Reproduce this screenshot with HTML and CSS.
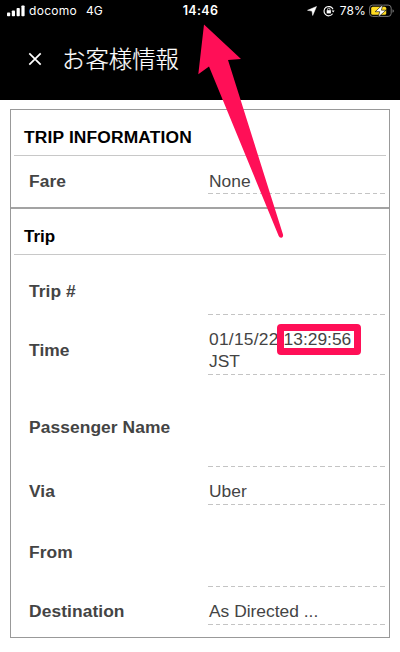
FILE: index.html
```html
<!DOCTYPE html>
<html lang="ja">
<head>
<meta charset="utf-8">
<title>お客様情報</title>
<link rel="stylesheet" href="styles.css">
</head>
<body>
<header class="top">
  <div class="status">
    <div class="carrier">
      <svg width="18" height="12" viewBox="0 0 18 12" fill="#fff"><rect x="0" y="7.5" width="3.2" height="3.8" rx=".8"/><rect x="4.8" y="5.5" width="3.2" height="5.8" rx=".8"/><rect x="9.6" y="3" width="3.2" height="8.3" rx=".8"/><rect x="14.4" y="0.5" width="3.2" height="10.8" rx=".8"/></svg>
      <span class="docomo">docomo</span><span class="network">4G</span>
    </div>
    <span class="clock">14:46</span>
    <div class="indicators">
      <svg width="10" height="10" viewBox="0 0 10 10"><path d="M9.5.5 5.7 9.5 5 5.1.5 4.3Z" fill="#fff" stroke="#fff" stroke-width=".5" stroke-linejoin="round"/></svg>
      <svg class="lock" width="12" height="12" viewBox="0 0 12 12" fill="none" stroke="#fff"><path d="M10 4.2A4.7 4.7 0 1 0 9.6 8.8" stroke-width="1.1"/><path d="M8.6 5.4h3l-1.4 2Z" fill="#fff" stroke="none"/><rect x="3.7" y="5.2" width="4.2" height="3.2" fill="#fff" stroke="none"/><path d="M4.6 5.4V4.3a1.2 1.2 0 0 1 2.4 0v1.1" stroke-width=".8"/></svg>
      <span class="percent">78%</span>
      <svg width="25" height="14" viewBox="0 0 25 14"><rect x=".6" y="1.1" width="21.6" height="11.3" rx="3" fill="none" stroke="#777"/><rect x="2.2" y="2.7" width="15" height="8.1" rx="1.5" fill="#ffdc22"/><path d="M23.6 5.3v3.4q1.2-.5 1.2-1.7t-1.2-1.7Z" fill="#888"/><path d="M14 .4 6.2 7.7h4.6L9 13.4 17 6.2h-4.6Z" fill="#fff" stroke="#000" stroke-width=".6"/></svg>
    </div>
  </div>
  <div class="titlebar">
    <svg width="14" height="14" viewBox="0 0 14 14"><path d="M1.3 1.3 12.7 12.7M12.7 1.3 1.3 12.7" stroke="#fff" stroke-width="1.7"/></svg>
    <h1>お客様情報</h1>
  </div>
</header>
<main class="card">
  <section class="fare">
    <h2>TRIP INFORMATION</h2>
    <div class="row"><span class="label">Fare</span><span class="value">None</span></div>
  </section>
  <section class="trip">
    <h2>Trip</h2>
    <div class="row medium"><span class="label">Trip #</span><span class="value"></span></div>
    <div class="row medium raised"><span class="label">Time</span><span class="value"><span class="date">01/15/22</span> <span class="marked">13:29:56</span><br>JST</span></div>
    <div class="row tall"><span class="label">Passenger Name</span><span class="value"></span></div>
    <div class="row raised"><span class="label">Via</span><span class="value">Uber</span></div>
    <div class="row large"><span class="label">From</span><span class="value"></span></div>
    <div class="row raised"><span class="label">Destination</span><span class="value">As Directed ...</span></div>
  </section>
</main>
<svg class="arrow" width="400" height="260" viewBox="0 0 400 260"><path d="M204 24.5 241 59 228 60 283 234.5Q283.5 237 281.5 237.7Q279.5 238 278.7 236L209 66.5 198.3 74.3Z" fill="#ff0f57"/></svg>
</body>
</html>
```
FILE: styles.css
```css
* { box-sizing: border-box; }
body {
  margin: 0;
  position: relative;
  height: 652px;
  overflow: hidden;
  background: #fff;
  font-family: "Liberation Sans", Arial, sans-serif;
}
svg { display: block; flex: none; }
.top { height: 100px; background: #000; color: #fff; }
.status {
  display: grid;
  grid-template-columns: 1fr auto 1fr;
  align-items: center;
  height: 22px;
  padding: 0 6px 0 7px;
  font: 12px/22px Inter, sans-serif;
}
.carrier, .indicators { display: flex; align-items: center; }
.carrier svg { margin-top: -1px; }
.docomo { margin-left: 4px; letter-spacing: .3px; }
.network { margin-left: 9px; }
.clock { font-weight: 600; font-size: 12.5px; letter-spacing: .3px; }
.indicators { justify-content: flex-end; }
.lock { margin-left: 6px; }
.percent { margin: 0 3px 0 5px; letter-spacing: .1px; }
.titlebar { display: flex; align-items: center; height: 74px; padding-left: 28px; }
h1 {
  margin: -2px 0 0 20px;
  font: 300 23.4px/30px "Noto Sans CJK JP", sans-serif;
  -webkit-text-stroke: .2px #fff;
}
.card {
  width: 380px;
  height: 529px;
  margin: 9px 0 0 10px;
  border: 1px solid #999;
}
.fare { height: 99px; border-bottom: 2px solid #a3a3a3; }
h2 {
  height: 46px;
  margin: 0 3px;
  padding: 6px 0 0 10px;
  border-bottom: 1px solid #c8c8c8;
  color: #000;
  font-size: 17px;
  line-height: 44px;
}
.fare h2 { padding-top: 5px; font-size: 17.4px; letter-spacing: .15px; }
.row {
  display: grid;
  grid-template-columns: 179px 1fr;
  height: 38px;
  margin: 0 3px 0 18px;
  color: #444;
  font-size: 17.4px;
  line-height: 22px;
}
.medium { height: 60px; }
.large { height: 82px; }
.tall { height: 92px; }
.label, .value { padding-top: 12px; align-content: center; }
.raised > .label, .raised > .value { padding-top: 10px; }
.label { font-weight: 700; letter-spacing: .08px; }
.value {
  padding-left: 1px;
  background: repeating-linear-gradient(90deg, #c4c4c4 0 4.5px, transparent 4.5px 7.5px) bottom / 100% 1px no-repeat;
}
.date { letter-spacing: .25px; }
.marked { position: relative; }
.marked::after {
  content: "";
  position: absolute;
  inset: -5px -10px -6px -7px;
  border: 7px solid #ff0f57;
  border-radius: 4px;
}
.arrow { position: absolute; top: 0; left: 0; pointer-events: none; }
```
